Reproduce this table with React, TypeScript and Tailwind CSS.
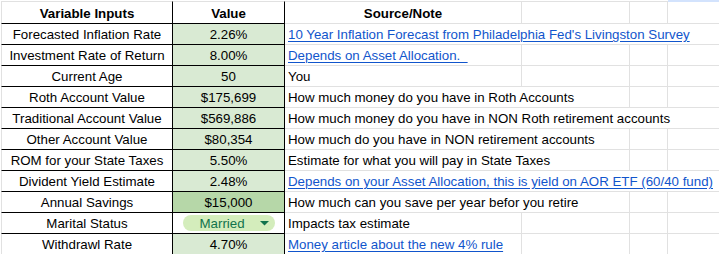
import { ReactNode } from "react";

type Row = {
  label: string;
  value: string;
  note: string;
  link?: boolean;
  span: 1 | 2 | 4;
  bg?: "green" | "dark" | "white";
};

const rows: Row[] = [
  { label: "Forecasted Inflation Rate", value: "2.26%", note: "10 Year Inflation Forecast from Philadelphia Fed's Livingston Survey", link: true, span: 4 },
  { label: "Investment Rate of Return", value: "8.00%", note: "Depends on Asset Allocation.\u00a0\u00a0", link: true, span: 1 },
  { label: "Current Age", value: "50", note: "You", span: 1 },
  { label: "Roth Account Value", value: "$175,699", note: "How much money do you have in Roth Accounts", span: 2 },
  { label: "Traditional Account Value", value: "$569,886", note: "How much money do you have in NON Roth retirement accounts", span: 4 },
  { label: "Other Account Value", value: "$80,354", note: "How much do you have in NON retirement accounts", span: 2 },
  { label: "ROM for your State Taxes", value: "5.50%", note: "Estimate for what you will pay in State Taxes", span: 2 },
  { label: "Divident Yield Estimate", value: "2.48%", note: "Depends on your Asset Allocation, this is yield on AOR ETF (60/40 fund)", link: true, span: 4 },
  { label: "Annual Savings", value: "$15,000", note: "How much can you save per year befor you retire", span: 2, bg: "dark" },
  { label: "Marital Status", value: "Married", note: "Impacts tax estimate", span: 1, bg: "white" },
  { label: "Withdrawl Rate", value: "4.70%", note: "Money article about the new 4% rule", link: true, span: 1 },
];

const grid = "border-b border-b-[#e1e1e1]";

function MarriedChip() {
  return (
    <div className="flex items-center justify-between w-[92px] h-[16px] rounded-full bg-[#d4edbc] pl-[17px] pr-[6px] text-[#11734b]">
      <span className="leading-[15px]">Married</span>
      <svg width="9" height="5" viewBox="0 0 9 5">
        <path d="M0 0 L9 0 L4.5 4.5 Z" fill="#11734b" />
      </svg>
    </div>
  );
}

function Trailing({ span, header }: { span: number; header?: boolean }) {
  const top = header ? "border-t border-t-[#e1e1e1]" : "";
  return (
    <>
      {span < 2 && (
        <div className={`w-[108px] border-r border-r-[#e1e1e1] ${grid} ${top}`} />
      )}
      {span < 4 && (
        <>
          <div className={`w-[38px] border-r border-r-[#e1e1e1] ${grid} ${top}`} />
          <div
            className={`flex-1 ${grid} ${
              header ? "border-t border-t-[#d3e3fd]" : ""
            }`}
          />
        </>
      )}
    </>
  );
}

function NoteCell({ span, children }: { span: number; children: ReactNode }) {
  const width =
    span === 1
      ? "w-[237px] border-r border-r-[#e1e1e1]"
      : span === 2
      ? "w-[345px] border-r border-r-[#e1e1e1]"
      : "flex-1";
  return (
    <div
      className={`${width} ${grid} flex items-end pb-[2px] pl-[3px] whitespace-pre overflow-visible`}
    >
      {children}
    </div>
  );
}

export default function App() {
  return (
    <div
      className="w-[719px] h-[254px] overflow-hidden bg-white text-black text-[13.3px]"
      style={{ fontFamily: "'Liberation Sans', Arial, sans-serif" }}
    >
      <div className="flex h-[1px]">
        <div className="w-[668px]" />
        <div className="flex-1 bg-[#d3e3fd]" />
      </div>

      {/* header */}
      <div className="flex h-[23px] font-bold">
        <div className="w-[1px]" />
        <div className="w-[172px] border-l border-l-[#e1e1e1] border-t border-t-[#e1e1e1] border-r border-r-black border-b border-b-black flex items-end justify-center pb-[2px] leading-[15px]">
          Variable Inputs
        </div>
        <div className="w-[112px] border-t border-t-[#e1e1e1] border-r border-r-black border-b border-b-black flex items-end justify-center pb-[2px] leading-[15px]">
          Value
        </div>
        <div className={`w-[237px] border-t border-t-[#e1e1e1] border-r border-r-[#e1e1e1] ${grid} flex items-end justify-center pb-[2px] leading-[15px]`}>
          Source/Note
        </div>
        <Trailing span={1} header />
      </div>

      {rows.map((row) => (
        <div key={row.label} className="flex h-[21px] leading-[15px]">
          <div className="w-[1px]" />
          <div className="w-[172px] border-l border-l-[#e1e1e1] border-r border-r-black border-b border-b-black flex items-end justify-center pb-[2px] whitespace-nowrap">
            {row.label}
          </div>
          <div
            className={`w-[112px] border-r border-r-black border-b border-b-black flex justify-center ${
              row.bg === "white"
                ? "bg-white items-center"
                : row.bg === "dark"
                ? "bg-[#b6d7a8] items-end pb-[2px]"
                : "bg-[#d9ead3] items-end pb-[2px]"
            }`}
          >
            {row.bg === "white" ? <MarriedChip /> : row.value}
          </div>
          <NoteCell span={row.span}>
            {row.link ? (
              <span className="text-[#1155cc] underline underline-offset-[2px]">
                {row.note}
              </span>
            ) : (
              <span>{row.note}</span>
            )}
          </NoteCell>
          <Trailing span={row.span} />
        </div>
      ))}
    </div>
  );
}
